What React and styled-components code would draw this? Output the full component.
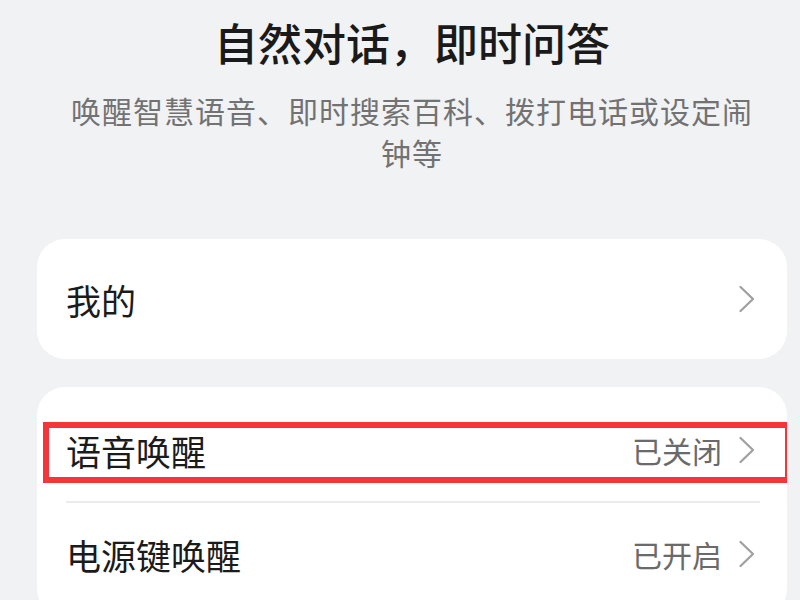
import styled, { createGlobalStyle } from "styled-components";

const GlobalStyle = createGlobalStyle`
  html, body {
    margin: 0;
    padding: 0;
    background: #f1f2f4;
  }
  body {
    font-family: "Noto Sans CJK SC", "Noto Sans", sans-serif;
    color: #1a1a1a;
  }
`;

function Chevron() {
  return (
    <ChevronIcon viewBox="0 0 18 28" aria-hidden="true">
      <path d="M2.5 2 L15 14 L2.5 26" />
    </ChevronIcon>
  );
}

function SettingRow({ label, value, highlighted }) {
  return (
    <Row>
      <RowLabel>{label}</RowLabel>
      <RowEnd>
        {value && <RowValue>{value}</RowValue>}
        <Chevron />
      </RowEnd>
      {highlighted && <Highlight />}
    </Row>
  );
}

export default function App() {
  return (
    <>
      <GlobalStyle />
      <Page>
        <Header>
          <Title>自然对话，即时问答</Title>
          <Subtitle>唤醒智慧语音、即时搜索百科、拨打电话或设定闹钟等</Subtitle>
        </Header>
        <Card $single>
          <SettingRow label="我的" />
        </Card>
        <Card>
          <SettingRow label="语音唤醒" value="已关闭" highlighted />
          <Divider />
          <SettingRow label="电源键唤醒" value="已开启" />
        </Card>
      </Page>
    </>
  );
}

const Page = styled.div`
  width: 750px;
  margin-left: 37px;
  padding-top: 14px;
  display: flex;
  flex-direction: column;
  gap: 28px;
  height: 586px;
  overflow: hidden;
`;

const Header = styled.header`
  display: flex;
  flex-direction: column;
  align-items: center;
  gap: 19px;
  margin-bottom: 38px;
`;

const Title = styled.h1`
  margin: 0;
  font-size: 44px;
  line-height: 56px;
  font-weight: 500;
  color: #1a1a1a;
`;

const Subtitle = styled.p`
  margin: 0;
  padding: 0 30px;
  font-size: 30px;
  letter-spacing: 1px;
  line-height: 42px;
  color: #727272;
  text-align: center;
`;

const Card = styled.section`
  background: #ffffff;
  border-radius: 28px;
  padding: ${(p) => (p.$single ? "9px 0" : "12px 0")};
  display: flex;
  flex-direction: column;
  flex-shrink: 0;
`;

const Row = styled.div`
  position: relative;
  height: 102px;
  display: flex;
  align-items: center;
  justify-content: space-between;
  padding: 0 31px 0 29px;
`;

const RowLabel = styled.span`
  font-size: 35px;
  color: #1b1b1b;
`;

const RowEnd = styled.div`
  display: flex;
  align-items: center;
  gap: 16px;
`;

const RowValue = styled.span`
  font-size: 30px;
  color: #6a6a6a;
`;

const ChevronIcon = styled.svg`
  width: 18px;
  height: 28px;
  fill: none;
  stroke: #a0a0a0;
  stroke-width: 2.3;
  stroke-linecap: round;
  stroke-linejoin: round;
`;

const Divider = styled.hr`
  margin: 0 27px 0 29px;
  border: none;
  border-top: 2px solid #ebebeb;
`;

const Highlight = styled.div`
  position: absolute;
  left: 6px;
  right: -4px;
  top: 23px;
  bottom: 18px;
  border: 6px solid #f4363a;
  pointer-events: none;
`;
